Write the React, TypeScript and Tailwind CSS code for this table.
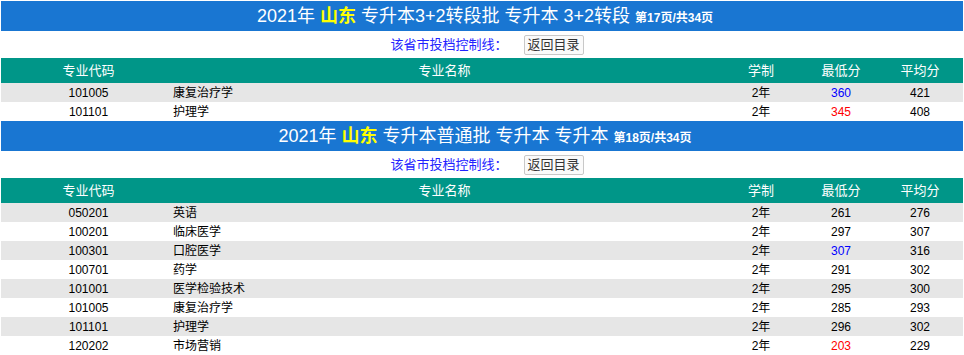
type Row = { code: string; name: string; len: string; low: string; avg: string; lowColor?: string };

const sections: { title: string; page: string; rows: Row[] }[] = [
  {
    title: " 专升本3+2转段批 专升本 3+2转段 ",
    page: "第17页/共34页",
    rows: [
      { code: "101005", name: "康复治疗学", len: "2年", low: "360", avg: "421", lowColor: "text-[#0000ff]" },
      { code: "101101", name: "护理学", len: "2年", low: "345", avg: "408", lowColor: "text-[#ff0000]" },
    ],
  },
  {
    title: " 专升本普通批 专升本 专升本 ",
    page: "第18页/共34页",
    rows: [
      { code: "050201", name: "英语", len: "2年", low: "261", avg: "276" },
      { code: "100201", name: "临床医学", len: "2年", low: "297", avg: "307" },
      { code: "100301", name: "口腔医学", len: "2年", low: "307", avg: "316", lowColor: "text-[#0000ff]" },
      { code: "100701", name: "药学", len: "2年", low: "291", avg: "302" },
      { code: "101001", name: "医学检验技术", len: "2年", low: "295", avg: "300" },
      { code: "101005", name: "康复治疗学", len: "2年", low: "285", avg: "293" },
      { code: "101101", name: "护理学", len: "2年", low: "296", avg: "302" },
      { code: "120202", name: "市场营销", len: "2年", low: "203", avg: "229", lowColor: "text-[#ff0000]" },
    ],
  },
];

const cols = "grid grid-cols-[171px_549px_80px_80px_82px]";

const Section = ({ title, page, rows }: { title: string; page: string; rows: Row[] }) => (
  <div className="flex flex-col">
    <div className="h-[30px] bg-[#1976d2] text-white flex items-center justify-center whitespace-pre text-[18px] pl-[6px]">
      <span>2021年 </span>
      <span className="font-bold text-[#ffff00]">山东</span>
      <span>{title}</span>
      <span className="text-[12px] font-bold pt-[3px]">{page}</span>
    </div>
    <div className="h-[27px] flex items-center justify-center gap-[16px] text-[13px] pl-[10px]">
      <span className="text-[#2222ff]">该省市投档控制线：</span>
      <button className="h-[20px] px-[3px] border border-[#c8c8c8] rounded-[2px] bg-[#fafafa] text-[#333] leading-none">
        返回目录
      </button>
    </div>
    <div className={`${cols} h-[25px] bg-[#009688] text-white text-[13px] items-center text-center`}>
      <span className="pl-[4px]">专业代码</span>
      <span className="pr-[4px]">专业名称</span>
      <span>学制</span>
      <span>最低分</span>
      <span className="pr-[4px]">平均分</span>
    </div>
    {rows.map((r, i) => (
      <div
        key={i}
        className={`${cols} h-[19px] items-center text-[12px] text-black ${i % 2 === 0 ? "bg-[#e6e6e6]" : "bg-white"}`}
      >
        <span className="text-center pl-[4px]">{r.code}</span>
        <span className="pl-[1px]">{r.name}</span>
        <span className="text-center">{r.len}</span>
        <span className={`text-center ${r.lowColor ?? ""}`}>{r.low}</span>
        <span className="text-center pr-[4px]">{r.avg}</span>
      </div>
    ))}
  </div>
);

export default function App() {
  return (
    <div
      className="w-[964px] h-[355px] overflow-hidden bg-white pl-[1px] pt-[1px]"
      style={{ fontFamily: '"Liberation Sans", "Noto Sans CJK SC", sans-serif' }}
    >
      <div className="w-[962px] flex flex-col">
        {sections.map((s, i) => (
          <Section key={i} {...s} />
        ))}
      </div>
    </div>
  );
}
